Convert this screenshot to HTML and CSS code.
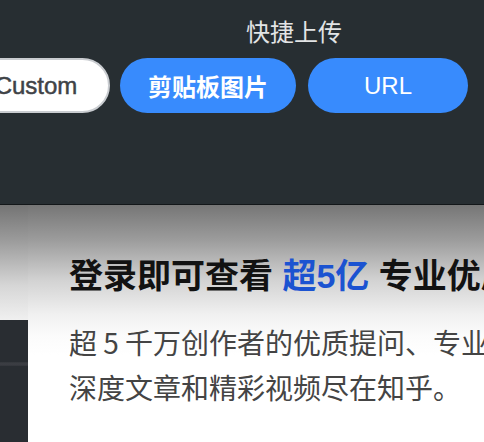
FILE: index.html
```html
<!DOCTYPE html>
<html lang="zh-CN">
<head>
<meta charset="utf-8">
<link rel="stylesheet" href="styles.css">
</head>
<body>
<section class="panel">
  <div class="panel-title">快捷上传</div>
  <div class="btn-row">
    <button class="btn btn-light">Custom</button>
    <button class="btn btn-blue btn-wide">剪贴板图片</button>
    <button class="btn btn-blue btn-url">URL</button>
  </div>
</section>
<section class="page">
  <aside class="side">
    <div class="side-top"></div>
    <div class="side-dark"><div class="side-band"></div></div>
  </aside>
  <main class="card">
    <h1 class="card-title">登录即可查看 <span class="hl">超5亿</span> 专业优质内容</h1>
    <p class="card-text">超 5 千万创作者的优质提问、专业回答、<br>深度文章和精彩视频尽在知乎。</p>
  </main>
</section>
</body>
</html>
```

FILE: styles.css
```css
* { box-sizing: border-box; }
html, body {
  margin: 0;
  padding: 0;
  width: 484px;
  height: 442px;
  overflow: hidden;
  background: #ffffff;
  font-family: "Liberation Sans", "Noto Sans CJK SC", sans-serif;
}
.panel {
  height: 205px;
  background: #272e32;
  border-bottom: 1px solid #131719;
  padding-top: 21px;
}
.panel-title {
  margin-left: 246px;
  font-size: 24px;
  line-height: 24px;
  color: #e2e4e5;
  white-space: nowrap;
}
.btn-row {
  margin-top: 13px;
  display: flex;
  justify-content: flex-end;
  padding-right: 16px;
}
.btn {
  flex: none;
  height: 55px;
  border-radius: 28px;
  font-family: "Liberation Sans", "Noto Sans CJK SC", sans-serif;
  font-size: 24px;
  border: none;
  padding: 0;
  display: flex;
  align-items: center;
  justify-content: center;
  white-space: nowrap;
}
.btn-light {
  width: 150px;
  padding-left: 2px;
  background: #ffffff;
  border: 2px solid #c9ccd0;
  color: #3f4347;
  font-weight: 400;
  -webkit-text-stroke: 0.5px #3f4347;
  margin-right: 10px;
}
.btn-blue {
  background: #388bfd;
  color: #ffffff;
}
.btn-wide {
  width: 176px;
  font-weight: 700;
  margin-right: 12px;
}
.btn-url {
  width: 160px;
  font-weight: 400;
}
.page {
  display: flex;
  height: 237px;
}
.side {
  width: 28px;
  flex: none;
  display: flex;
  flex-direction: column;
}
.side-top {
  height: 115px;
  background: linear-gradient(#747474, #9a9a9a 30%, #d6d6d6 70%, #f0f0f0);
}
.side-dark {
  flex: 1;
  background: #292d32;
  padding-top: 42px;
}
.side-band {
  height: 4px;
  background: linear-gradient(#33363b, #3d3f45, #33363b);
}
.card {
  flex: 1;
  min-width: 0;
  overflow: hidden;
  padding: 49px 0 0 41px;
  background: linear-gradient(#767676 0px, #9c9c9c 35px, #d2d2d2 75px, #f1f1f1 110px, #fbfbfb 130px, #ffffff 150px);
}
.card-title {
  margin: 0;
  font-family: "Liberation Sans", "Noto Sans CJK SC", sans-serif;
  font-size: 34px;
  line-height: 45px;
  font-weight: 700;
  color: #121212;
  white-space: nowrap;
}
.hl { color: #1b53d1; }
.card-text {
  margin: 21px 0 0;
  font-family: "Noto Sans CJK SC", sans-serif;
  font-size: 28px;
  line-height: 45px;
  color: #444444;
  white-space: nowrap;
}
```
